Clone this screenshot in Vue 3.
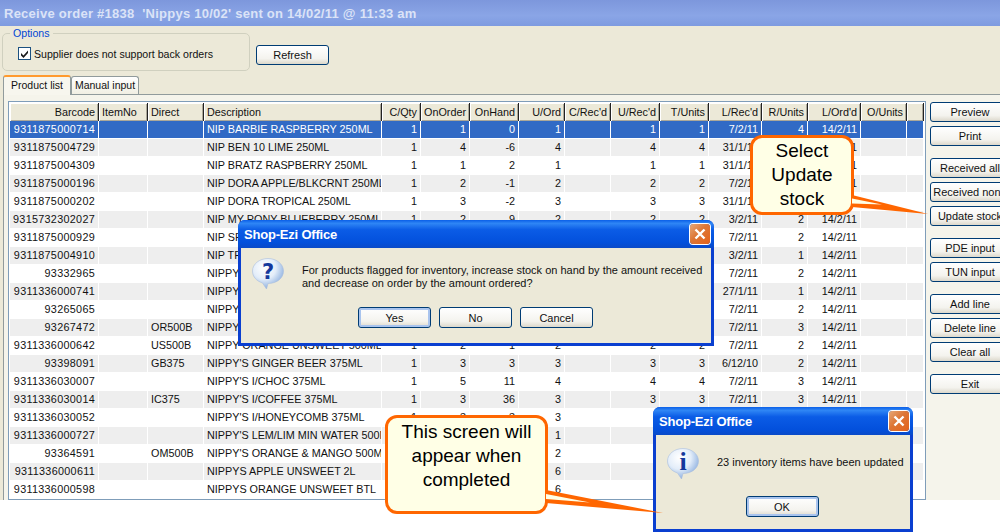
<template>
  <div class="screen">
    <div class="app">
      <div class="titlebar">{{ title }}</div>

      <div class="top-row">
        <fieldset class="options">
          <legend>Options</legend>
          <label class="check-row">
            <span class="checkbox">
              <svg width="11" height="11" viewBox="0 0 11 11"><path d="M2 5l2.500 2.500L9 2.500v2.600L4.500 10 2 7.500z" fill="#1a1a1a" /></svg>
            </span>
            Supplier does not support back orders
          </label>
        </fieldset>
        <button class="xp-btn refresh">Refresh</button>
      </div>

      <div class="tabs">
        <div class="tab active">Product list</div>
        <div class="tab">Manual input</div>
      </div>

      <div class="pane">
        <div class="grid-frame">
          <table class="grid">
            <colgroup>
              <col v-for="c in columns" :key="c.name" :width="c.width">
            </colgroup>
            <thead>
              <tr>
                <th v-for="c in columns" :key="c.name" :class="c.left ? 'left' : 'right'">{{ c.name }}</th>
              </tr>
            </thead>
            <tbody>
              <tr v-for="(row, i) in rows" :key="i" :class="{ selected: i === 0, stripe: i % 2 === 1 }">
                <td v-for="(c, j) in columns" :key="j" :class="c.left ? 'left' : 'right'">{{ row[j] }}</td>
              </tr>
            </tbody>
          </table>
        </div>

        <div class="side">
          <div v-for="(group, i) in sideButtons" :key="i" class="side-group">
            <button v-for="b in group" :key="b" class="xp-btn side-btn">{{ b }}</button>
          </div>
        </div>
      </div>
    </div>

    <!-- confirm dialog -->
    <div class="dialog confirm">
      <div class="dialog-title">
        <span>Shop-Ezi Office</span>
        <span class="close">
          <svg width="20" height="20" viewBox="0 0 20 20"><path d="M5.500 5.500l9 9M14.500 5.500l-9 9" stroke="#fff" stroke-width="2.400" /></svg>
        </span>
      </div>
      <div class="dialog-body">
        <div class="msg-row">
          <svg class="icon" width="34" height="34" viewBox="0 0 34 34">
            <defs>
              <radialGradient id="bubbleA" cx="0.38" cy="0.3" r="0.75">
                <stop offset="0" stop-color="#ffffff" />
                <stop offset="0.5" stop-color="#e3edf9" />
                <stop offset="0.85" stop-color="#9dbbe4" />
                <stop offset="1" stop-color="#7397cf" />
              </radialGradient>
            </defs>
            <path d="M17 1.500C8.500 1.500 1.500 7 1.500 14c0 6 4.200 10 10 12l4 6 1.500-5.500C26 26.500 32.500 21 32.500 14 32.500 7 25.500 1.500 17 1.500z" fill="url(#bubbleA)" stroke="#a9bedd" stroke-width="0.6" />
            <text x="17" y="22" text-anchor="middle" class="icon-mark">?</text>
          </svg>
          <p class="msg">For products flagged for inventory, increase stock on hand by the amount received and decrease on order by the amount ordered?</p>
        </div>
        <div class="dialog-buttons">
          <button class="xp-btn dlg-btn default">Yes</button>
          <button class="xp-btn dlg-btn">No</button>
          <button class="xp-btn dlg-btn">Cancel</button>
        </div>
      </div>
    </div>

    <!-- done dialog -->
    <div class="dialog done">
      <div class="dialog-title">
        <span>Shop-Ezi Office</span>
        <span class="close">
          <svg width="20" height="20" viewBox="0 0 20 20"><path d="M5.500 5.500l9 9M14.500 5.500l-9 9" stroke="#fff" stroke-width="2.400" /></svg>
        </span>
      </div>
      <div class="dialog-body">
        <div class="msg-row">
          <svg class="icon" width="34" height="34" viewBox="0 0 34 34">
            <defs>
              <radialGradient id="bubbleB" cx="0.38" cy="0.3" r="0.75">
                <stop offset="0" stop-color="#ffffff" />
                <stop offset="0.5" stop-color="#e3edf9" />
                <stop offset="0.85" stop-color="#9dbbe4" />
                <stop offset="1" stop-color="#7397cf" />
              </radialGradient>
            </defs>
            <path d="M17 1.500C8.500 1.500 1.500 7 1.500 14c0 6 4.200 10 10 12l4 6 1.500-5.500C26 26.500 32.500 21 32.500 14 32.500 7 25.500 1.500 17 1.500z" fill="url(#bubbleB)" stroke="#a9bedd" stroke-width="0.6" />
            <text x="17" y="23" text-anchor="middle" class="icon-mark info">i</text>
          </svg>
          <p class="msg">23 inventory items have been updated</p>
        </div>
        <div class="dialog-buttons">
          <button class="xp-btn dlg-btn default">OK</button>
        </div>
      </div>
    </div>

    <!-- callouts -->
    <svg class="tails" width="1000" height="532" viewBox="0 0 1000 532">
      <path d="M852 195L928 214 852 207z" fill="#ff6600" />
      <path d="M852 198.500L882 204.500 852 203.500z" fill="#ffffe6" />
      <path d="M546 490L663 513 546 503z" fill="#ff6600" />
      <path d="M546 494L590 502.500 546 499z" fill="#ffffe6" />
    </svg>
    <div class="callout select">Select<br>Update<br>stock</div>
    <div class="callout appear">This screen will<br>appear when<br>completed</div>
  </div>
</template>

<script setup>
const title = "Receive order #1838  'Nippys 10/02' sent on 14/02/11 @ 11:33 am"

const columns = [
  { name: 'Barcode', width: 89 },
  { name: 'ItemNo', width: 49, left: true },
  { name: 'Direct', width: 56, left: true },
  { name: 'Description', width: 178, left: true },
  { name: 'C/Qty', width: 39 },
  { name: 'OnOrder', width: 49 },
  { name: 'OnHand', width: 49 },
  { name: 'U/Ord', width: 46 },
  { name: "C/Rec'd", width: 46 },
  { name: "U/Rec'd", width: 49 },
  { name: 'T/Units', width: 49 },
  { name: "L/Rec'd", width: 53 },
  { name: 'R/Units', width: 46 },
  { name: "L/Ord'd", width: 53 },
  { name: 'O/Units', width: 46 },
  { name: '', width: 17 }
]

const rows = [
  ['9311875000714', '', '', 'NIP BARBIE RASPBERRY 250ML', 1, 1, 0, 1, '', 1, 1, '7/2/11', 4, '14/2/11'],
  ['9311875004729', '', '', 'NIP BEN 10 LIME 250ML', 1, 4, -6, 4, '', 4, 4, '31/1/11', 2, '14/2/11'],
  ['9311875004309', '', '', 'NIP BRATZ RASPBERRY 250ML', 1, 1, 2, 1, '', 1, 1, '31/1/11', 2, '14/2/11'],
  ['9311875000196', '', '', 'NIP DORA APPLE/BLKCRNT 250ML', 1, 2, -1, 2, '', 2, 2, '7/2/11', 2, '14/2/11'],
  ['9311875000202', '', '', 'NIP DORA TROPICAL 250ML', 1, 3, -2, 3, '', 3, 3, '31/1/11', 2, '14/2/11'],
  ['9315732302027', '', '', 'NIP MY PONY BLUEBERRY 250ML', 1, 2, 9, 2, '', 2, 2, '3/2/11', 2, '14/2/11'],
  ['9311875000929', '', '', 'NIP SPONGEBOB 250ML', 1, 2, 1, 2, '', 2, 2, '7/2/11', 2, '14/2/11'],
  ['9311875004910', '', '', 'NIP TROPICAL 250ML', 1, 1, 2, 1, '', 1, 1, '3/2/11', 1, '14/2/11'],
  ['93332965', '', '', "NIPPY'S APPLE 375ML", 1, 2, 1, 2, '', 2, 2, '7/2/11', 2, '14/2/11'],
  ['9311336000741', '', '', "NIPPY'S APPLE 500ML", 1, 1, 1, 1, '', 1, 1, '27/1/11', 1, '14/2/11'],
  ['93265065', '', '', "NIPPY'S APRICOT 375ML", 1, 2, 1, 2, '', 2, 2, '7/2/11', 2, '14/2/11'],
  ['93267472', '', 'OR500B', "NIPPY'S ORANGE 500ML", 1, 3, 1, 3, '', 3, 3, '7/2/11', 3, '14/2/11'],
  ['9311336000642', '', 'US500B', 'NIPPY ORANGE UNSWEET 500ML', 1, 2, 1, 2, '', 2, 2, '7/2/11', 2, '14/2/11'],
  ['93398091', '', 'GB375', "NIPPY'S GINGER BEER 375ML", 1, 3, 3, 3, '', 3, 3, '6/12/10', 2, '14/2/11'],
  ['9311336030007', '', '', "NIPPY'S I/CHOC 375ML", 1, 5, 11, 4, '', 4, 4, '7/2/11', 3, '14/2/11'],
  ['9311336030014', '', 'IC375', "NIPPY'S I/COFFEE 375ML", 1, 3, 36, 3, '', 3, 3, '7/2/11', 3, '14/2/11'],
  ['9311336030052', '', '', "NIPPY'S I/HONEYCOMB 375ML", 1, 3, 3, 3],
  ['9311336000727', '', '', "NIPPY'S LEM/LIM MIN WATER 500ML", 1, 1, 1, 1],
  ['93364591', '', 'OM500B', "NIPPY'S ORANGE & MANGO 500ML", 1, 2, 1, 2],
  ['9311336000611', '', '', 'NIPPYS APPLE UNSWEET 2L', 1, 6, 1, 6],
  ['9311336000598', '', '', 'NIPPYS ORANGE UNSWEET BTL', 1, 6, 1, 6],
  []
]

const sideButtons = [
  ['Preview', 'Print'],
  ['Received all', 'Received none', 'Update stock'],
  ['PDE input', 'TUN input'],
  ['Add line', 'Delete line', 'Clear all'],
  ['Exit']
]
</script>

<style>
html, body {
  margin: 0;
  background: #fff;
}
</style>

<style scoped>
.screen {
  position: relative;
  width: 1000px;
  height: 532px;
  overflow: hidden;
  background: #fff;
  font-family: "Liberation Sans", Arial, sans-serif;
  font-size: 11px;
  color: #111;
}

.app {
  height: 500px;
  display: flex;
  flex-direction: column;
  background: #ece9d8;
}

.titlebar {
  height: 26px;
  line-height: 27px;
  padding-left: 4px;
  white-space: pre;
  font-weight: bold;
  font-size: 13px;
  letter-spacing: 0.25px;
  color: #dbe3f7;
  background: linear-gradient(to bottom, #7d97dc, #8aa5e6 60%, #7e9be0);
}

.top-row {
  height: 48px;
  box-sizing: border-box;
  display: flex;
  align-items: flex-start;
  padding-left: 2px;
}

.options {
  width: 248px;
  height: 45px;
  box-sizing: border-box;
  margin: 0;
  padding: 0 0 0 15px;
  border: 1px solid #d0d0bf;
  border-radius: 5px;
}
.options legend {
  margin-left: -8px;
  padding: 0 3px;
  color: #0046d5;
  font-size: 10.6px;
  line-height: 14px;
}

.check-row {
  display: flex;
  align-items: center;
  gap: 3px;
  margin-top: 7px;
  font-size: 10.6px;
}
.checkbox {
  width: 11px;
  height: 11px;
  border: 1px solid #1c5180;
  background: #fff;
  display: block;
}
.checkbox svg {
  display: block;
}

.xp-btn {
  display: block;
  box-sizing: border-box;
  height: 20px;
  margin: 0;
  padding: 0;
  border: 1px solid #003c74;
  border-radius: 3px;
  background: linear-gradient(to bottom, #ffffff, #f4f3ee 70%, #dcd8cb);
  font: inherit;
  color: #111;
  white-space: nowrap;
}

.refresh {
  width: 73px;
  margin: 19px 0 0 6px;
}

.tabs {
  height: 20px;
  display: flex;
  align-items: flex-end;
  padding-left: 3px;
  position: relative;
  z-index: 1;
}
.tab {
  box-sizing: border-box;
  width: 68px;
  height: 18px;
  line-height: 17px;
  text-align: center;
  white-space: nowrap;
  font-size: 10.5px;
  background: linear-gradient(to bottom, #fff, #f1efe3);
  border: 1px solid #919b9c;
  border-bottom: 0;
  border-radius: 3px 3px 0 0;
}
.tab.active {
  height: 20px;
  margin-bottom: -1px;
  background: #f7f6ee;
  border: 0;
  border-top: 2px solid #ff9a2e;
  border-right: 1px solid #919b9c;
  border-left: 1px solid #919b9c;
}

.pane {
  height: 406px;
  box-sizing: border-box;
  margin-left: 3px;
  padding: 6px 0 0 4px;
  display: flex;
  border-top: 1px solid #919b9c;
  border-left: 1px solid #919b9c;
  background: #f5f4eb;
}

.grid-frame {
  box-sizing: border-box;
  width: 918px;
  height: 399px;
  flex: none;
  padding: 1px;
  border: 1px solid #7f9db9;
  background: #fff;
  overflow: hidden;
}

.grid {
  width: 914px;
  table-layout: fixed;
  border-collapse: separate;
  border-spacing: 0;
}
.grid th,
.grid td {
  height: 18px;
  box-sizing: border-box;
  padding: 0 3px;
  overflow: hidden;
  white-space: nowrap;
  font-weight: normal;
  line-height: 15px;
}
.grid th {
  background: #ece9d8;
  border-right: 1px solid #222;
  font-size: 10.8px;
  box-shadow: inset 1px 1px 0 #fff, inset -1px -1px 0 #aca899;
}
.grid td {
  border-right: 1px solid #fff;
  border-bottom: 1px solid #fff;
  font-size: 10.8px;
}
.grid td:first-child {
  letter-spacing: 0.3px;
}
.left {
  text-align: left;
}
.right {
  text-align: right;
}
.stripe td {
  background: #eeeeee;
}
.selected td {
  background: #316ac5;
  color: #fff;
}

.side {
  flex: none;
  margin-left: 4px;
  padding-top: 1px;
  display: flex;
  flex-direction: column;
  gap: 12px;
}
.side-group {
  display: flex;
  flex-direction: column;
  gap: 4px;
}
.side-btn {
  width: 80px;
}

.dialog {
  position: absolute;
  box-sizing: border-box;
  display: flex;
  flex-direction: column;
  background: #0a3fd0;
  border-radius: 7px 7px 0 0;
  padding: 0 3px 3px;
}
.confirm {
  left: 238px;
  top: 220px;
  width: 476px;
  height: 126px;
}
.done {
  left: 653px;
  top: 407px;
  width: 260px;
  height: 125px;
}

.dialog-title {
  height: 28px;
  margin: 0 -3px;
  padding: 0 4px 0 6px;
  display: flex;
  align-items: center;
  justify-content: space-between;
  flex: none;
  border-radius: 7px 7px 0 0;
  background: linear-gradient(to bottom, #0a5fe8, #2f86f5 12%, #0b5ce6 35%, #0350dc 80%, #0a4ac8);
  color: #fff;
  font-weight: bold;
  font-size: 13px;
  letter-spacing: -0.2px;
}
.close {
  width: 20px;
  height: 20px;
  box-sizing: border-box;
  display: block;
  border-radius: 3px;
  box-shadow: 0 0 0 1px #fff;
  background: linear-gradient(135deg, #e6a878, #dd7636 45%, #e4621a);
}
.close svg {
  display: block;
}

.dialog-body {
  flex: 1;
  background: #ece9d8;
  position: relative;
}

.msg-row {
  display: flex;
}
.icon {
  flex: none;
}
.msg {
  margin: 0;
  line-height: 13px;
  font-size: 11px;
}
.confirm .msg-row {
  padding: 9px 0 0 10px;
  gap: 17px;
}
.confirm .msg {
  margin-top: 7px;
  width: 412px;
}
.done .msg-row {
  padding: 12px 0 0 10px;
  gap: 17px;
}
.done .msg {
  margin-top: 9px;
  white-space: nowrap;
}

.icon-mark {
  font-family: "DejaVu Sans", sans-serif;
  font-weight: bold;
  font-size: 21px;
  fill: #14389c;
}
.icon-mark.info {
  font-family: "Liberation Serif", serif;
  font-size: 26px;
}

.dialog-buttons {
  display: flex;
  justify-content: center;
  gap: 8px;
}
.confirm .dialog-buttons {
  margin-top: 16px;
  margin-right: 1px;
}
.done .dialog-buttons {
  margin-top: 15px;
  margin-right: 2px;
}
.dlg-btn {
  width: 73px;
  height: 21px;
}
.default {
  box-shadow: inset 0 0 0 2px #a9c4ee;
}

.tails {
  position: absolute;
  left: 0;
  top: 0;
  z-index: 3;
  pointer-events: none;
}

.callout {
  position: absolute;
  z-index: 2;
  box-sizing: border-box;
  display: flex;
  align-items: center;
  justify-content: center;
  text-align: center;
  background: #ffffe6;
  border: 3px solid #ff6600;
  border-radius: 12px;
  font-size: 19px;
  line-height: 24px;
  color: #000;
}
.select {
  left: 750px;
  top: 135px;
  width: 104px;
  height: 80px;
}
.appear {
  left: 385px;
  top: 415px;
  width: 163px;
  height: 99px;
  padding-bottom: 17px;
}
</style>
